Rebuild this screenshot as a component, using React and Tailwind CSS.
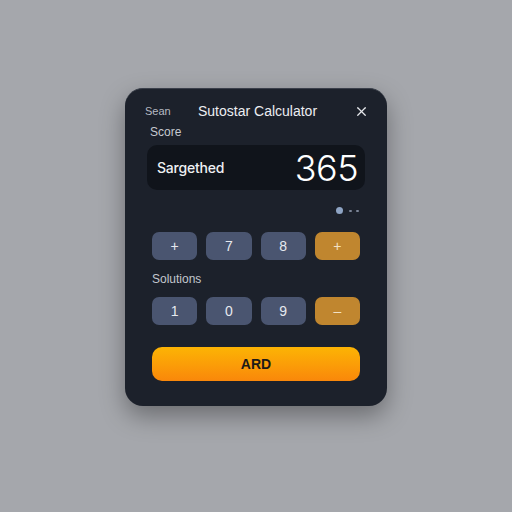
import { X } from "lucide-react";

const ROW_ONE = [
  { label: "+", accent: false },
  { label: "7", accent: false },
  { label: "8", accent: false },
  { label: "+", accent: true },
];

const ROW_TWO = [
  { label: "1", accent: false },
  { label: "0", accent: false },
  { label: "9", accent: false },
  { label: "\u2013", accent: true },
];

function KeyRow({ keys }) {
  return (
    <div className="grid grid-cols-4 gap-[9px]">
      {keys.map((k, i) => (
        <button
          key={i}
          className={`flex h-[28px] items-center justify-center rounded-[7px] text-[14px] ${
            k.accent ? "bg-[#c0862f] text-[#f3e2c4]" : "bg-[#4a5570] text-[#e6e9ef]"
          }`}
        >
          {k.label}
        </button>
      ))}
    </div>
  );
}

export default function App() {
  return (
    <div
      className="flex h-[512px] w-[512px] items-center justify-center bg-[#a5a7ac]"
      style={{ fontFamily: "'Liberation Sans', Arial, sans-serif" }}
    >
      <div className="mt-[-18px] flex w-[262px] flex-col rounded-[18px] border-t border-[#3b404b] bg-[#1c212b] px-[22px] pb-[25px] pt-[12px] shadow-[0_10px_24px_rgba(0,0,0,0.35)]">
        {/* header */}
        <div className="flex h-[20px] items-center">
          <span className="ml-[-2px] w-[53px] text-[11px] text-[#b6bac2]">Sean</span>
          <span className="text-[14px] text-[#eceef2]">Sutostar Calculator</span>
          <X className="ml-auto mr-[-4px] h-[15px] w-[15px] text-[#e6e8ec]" strokeWidth={2} />
        </div>

        <span className="ml-[3px] mt-[2px] text-[12px] text-[#c6c9d0]">Score</span>

        {/* display */}
        <div className="mt-[4px] flex h-[45px] items-center justify-between rounded-[10px] bg-[#10141b] pl-[10px] pr-[7px] font-['Inter',sans-serif]">
          <span className="text-[14px] font-medium tracking-[-0.2px] text-[#eef0f3]">Sargethed</span>
          <span className="text-[36px] font-light leading-none tracking-[-0.5px] text-white">365</span>
        </div>

        <div className="mt-[17px] flex items-center justify-end gap-[4px] pr-[6px]">
          <span className="h-[7px] w-[7px] rounded-full bg-[#8ea4c4]" />
          <span className="ml-[2px] h-[2px] w-[3px] rounded-full bg-[#7c8698]" />
          <span className="h-[2px] w-[3px] rounded-full bg-[#7c8698]" />
        </div>

        <div className="mt-[18px] px-[5px]">
          <KeyRow keys={ROW_ONE} />
        </div>

        <span className="ml-[5px] mt-[10px] text-[12px] text-[#c3c7ce]">Solutions</span>

        <div className="mt-[9px] px-[5px]">
          <KeyRow keys={ROW_TWO} />
        </div>

        <div className="mt-[22px] px-[5px]">
          <button className="flex h-[34px] w-full items-center justify-center rounded-[10px] bg-gradient-to-b from-[#fcb404] to-[#f9870a] text-[14px] font-bold text-[#1c1a17]">
            ARD
          </button>
        </div>
      </div>
    </div>
  );
}
